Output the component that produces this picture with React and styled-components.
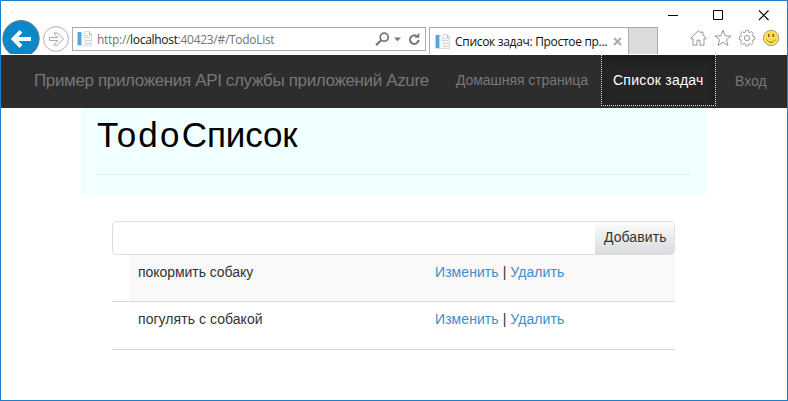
import React from 'react';
import styled, { createGlobalStyle } from 'styled-components';

const GlobalStyle = createGlobalStyle`
  * { box-sizing: border-box; }
  body { margin: 0; background: #fff; font-family: "Liberation Sans", Arial, sans-serif; }
  svg { display: block; flex: none; }
`;

const Window = styled.div`
  width: 788px;
  height: 401px;
  border: 1px solid #1a7fd0;
  background: #fff;
  overflow: hidden;
`;

const TitleBar = styled.div`
  height: 26px;
  display: flex;
  justify-content: flex-end;
  padding: 8px 17px 0 0;
  gap: 33px;
`;

const Toolbar = styled.div`
  height: 28px;
  display: flex;
  align-items: flex-start;
`;

const BackButton = styled.div`
  width: 40px;
  height: 34px;
  margin-top: -7px;
  overflow: hidden;
`;

const ForwardButton = styled.div`
  width: 31px;
  padding: 0 0 0 2px;
  margin-top: -1px;
`;

const AddressBar = styled.div`
  width: 354px;
  height: 24px;
  border: 1px solid #ababab;
  display: flex;
  align-items: center;
  padding: 0 3px 0 4px;
`;

const Url = styled.div`
  flex: 1;
  margin-left: 4px;
  font: 12px/22px "Open Sans", "Noto Sans", sans-serif;
  letter-spacing: ${(p) => p.$tracking}px;
  color: #757575;
  white-space: nowrap;
  padding-top: 1px;
`;

const Host = styled.span`
  color: #111;
`;

const Tab = styled.div`
  width: 200px;
  height: 27px;
  margin-left: 3px;
  border: 1px solid #ababab;
  border-bottom: 0;
  display: flex;
  align-items: center;
  padding: 1px 6px 0 5px;
`;

const TabTitle = styled.div`
  flex: 1;
  margin-left: 4px;
  font: 12px/22px "Open Sans", "Noto Sans", sans-serif;
  letter-spacing: ${(p) => p.$tracking}px;
  color: #111;
  white-space: nowrap;
`;

const NewTab = styled.div`
  width: 30px;
  height: 27px;
  margin-left: -1px;
  border: 1px solid #ababab;
  border-bottom: 0;
  background: #dcdcdc;
`;

const BrowserTools = styled.div`
  flex: 1;
  display: flex;
  justify-content: flex-end;
  gap: 6px;
  padding: 2px 7px 0 0;
`;

const NavBar = styled.nav`
  height: 53px;
  background: #2d2d2d;
  display: flex;
  color: #777;
`;

const Brand = styled.div`
  width: 443px;
  padding-left: 33px;
  font-size: 17px;
  line-height: 51px;
  letter-spacing: ${(p) => p.$tracking}px;
  white-space: nowrap;
`;

const NavLink = styled.div`
  width: ${(p) => p.$width}px;
  height: 51px;
  padding-left: ${(p) => p.$inset || 12}px;
  font-size: 14px;
  line-height: ${(p) => p.$line || 50}px;
  letter-spacing: ${(p) => p.$tracking || 0}px;
  white-space: nowrap;
`;

const ActiveNavLink = styled(NavLink)`
  padding-left: 11px;
  color: #fff;
  background: #252525;
  border: 1px dotted #ddd;
  border-top: 0;
  box-shadow: inset 0 4px 6px #1c1c1c;
`;

const Header = styled.header`
  width: 625px;
  height: 86px;
  margin-left: 80px;
  padding: 0 15px;
  background: #f0ffff;
`;

const Title = styled.h1`
  height: 67px;
  margin: 0;
  padding-left: 1px;
  border-bottom: 1px solid #dfeeee;
  font-size: 35px;
  font-weight: 400;
  line-height: 53px;
  letter-spacing: ${(p) => p.$tracking}px;
  color: #000;
  white-space: nowrap;
`;

const LatinPart = styled.span`
  letter-spacing: ${(p) => p.$tracking}px;
`;

const TodoPanel = styled.main`
  width: 563px;
  margin: 27px 0 0 111px;
`;

const AddForm = styled.div`
  height: 34px;
  display: flex;
  border: 1px solid #dedede;
  border-radius: 4px;
  overflow: hidden;
`;

const TaskField = styled.div`
  flex: 1;
`;

const AddButton = styled.div`
  width: 79px;
  padding-left: 9px;
  background: linear-gradient(#fdfdfd, #d9dadb);
  font-size: 14px;
  line-height: 31px;
  letter-spacing: ${(p) => p.$tracking}px;
  color: #333;
`;

const TaskRow = styled.div`
  height: ${(p) => p.$height}px;
  border-bottom: 1px solid #dadada;
  padding-left: 17px;
`;

const TaskCells = styled.div`
  height: 100%;
  display: grid;
  grid-template-columns: 297px 1fr;
  padding-left: 9px;
  background: ${(p) => (p.$striped ? '#f9f9f9' : '#fff')};
  font-size: 14px;
  line-height: 34px;
  color: #333;
`;

const TaskName = styled.div`
  letter-spacing: ${(p) => p.$tracking}px;
`;

const Actions = styled.div`
  letter-spacing: ${(p) => p.$tracking}px;
`;

const Link = styled.a`
  color: #428bca;
`;

const PageIcon = () => (
  <svg width="16" height="16" viewBox="0 0 16 16">
    <path d="M4.5 2.5h3v-2h5l2 2v12h-10z" fill="#f8f9fa" stroke="#d8dcdf" />
    <path d="M0 1h5v13H0z" fill="#b5d6ee" />
    <path d="M1 1h3v13H1z" fill="#58a4dc" />
    <path d="M0 14.5h5" stroke="#ddd" />
    <path d="M12.5 1v3H15" fill="none" stroke="#bbb" />
    <path d="M7 4.5h4M7 6.5h6M9 9.5h5M9 12.5h5" stroke="#cfd4d8" />
    <path d="M8.5 8v5" stroke="#ddd" />
  </svg>
);

const tasks = [
  { name: 'покормить собаку', height: 47, striped: true, tracking: -0.05 },
  { name: 'погулять с собакой', height: 48, striped: false, tracking: 0.05 },
];

export default function App() {
  return (
    <>
      <GlobalStyle />
      <Window>
        <TitleBar>
          <svg width="12" height="12" viewBox="0 0 12 12"><path d="M0 6.5h10" stroke="#000" /></svg>
          <svg width="12" height="12" viewBox="0 0 12 12"><path d="M.5 1.5h9v9h-9z" fill="none" stroke="#000" /></svg>
          <svg width="12" height="12" viewBox="0 0 12 12"><path d="M1 1.5l9.5 9.5M10.5 1.5L1 11" stroke="#000" strokeWidth="1.1" /></svg>
        </TitleBar>
        <Toolbar>
          <BackButton>
            <svg width="40" height="40" viewBox="0 0 40 40">
              <circle cx="20" cy="18.8" r="18.2" fill="#0a88c8" stroke="#69777e" />
              <path d="M30 18.9H13M20 11.3l-7.4 7.6 7.4 7.6" fill="none" stroke="#fff" strokeWidth="4" />
            </svg>
          </BackButton>
          <ForwardButton>
            <svg width="27" height="27" viewBox="0 0 27 27">
              <circle cx="13" cy="13" r="12.4" fill="#fff" stroke="#b0b0b0" />
              <path d="M6.5 11.5h8.2L10.8 7h3.6l6.1 6-6.1 6h-3.6l3.9-4.5H6.5z" fill="#fff" stroke="#aaa" />
            </svg>
          </ForwardButton>
          <AddressBar>
            <PageIcon />
            <Url $tracking={-0.3}>http://<Host>localhost</Host>:40423/#/TodoList</Url>
            <svg width="49" height="16" viewBox="0 0 49 16">
              <circle cx="11.2" cy="6.2" r="4" fill="none" stroke="#777" strokeWidth="1.8" />
              <path d="M8.3 9.2L3 14.1" stroke="#777" strokeWidth="2.2" />
              <path d="M21 6.5h7l-3.5 3.7z" fill="#777" />
              <path d="M45.6 8.9a4.3 4.3 0 1 1-2.2-4" fill="none" stroke="#777" strokeWidth="2" />
              <path d="M41.3 6.8h5V1.7z" fill="#777" />
            </svg>
          </AddressBar>
          <Tab>
            <PageIcon />
            <TabTitle $tracking={-0.31}>Список задач: Простое пр...</TabTitle>
            <svg width="9" height="9" viewBox="0 0 9 9"><path d="M1 1l7 7M8 1L1 8" stroke="#aaa" strokeWidth="2" /></svg>
          </Tab>
          <NewTab />
          <BrowserTools>
            <svg width="18" height="18" viewBox="0 0 18 18">
              <path d="M.7 9.2L8.5 1.7l2.5 2.4V3h2v3l3.3 3.2-1 1-1.3-1v7h-4v-5h-3v5H3v-7l-1.3 1z" fill="#fff" stroke="#999" />
            </svg>
            <svg width="18" height="18" viewBox="0 0 18 18">
              <path d="M9 1.2l2.1 5.6 6 .2-4.7 3.7 1.6 5.8L9 13.2l-5 3.3 1.6-5.8L.9 7l6-.2z" fill="#fff" stroke="#999" />
            </svg>
            <svg width="18" height="18" viewBox="0 0 18 18">
              <path d="M7.4 1.5h3l.4 2.1 1.2.5 1.8-1.3 2.1 2.1-1.3 1.8.5 1.2 2 .4v3l-2 .4-.5 1.2 1.3 1.8-2.1 2.1-1.8-1.3-1.2.5-.4 2h-3l-.4-2-1.2-.5L4 16.8l-2.1-2.1 1.3-1.8-.5-1.2-1.9-.4v-3l1.9-.4.5-1.2L1.9 4.9 4 2.8l1.8 1.3 1.2-.5z" transform="translate(.6 -.1) scale(.94)" fill="#fff" stroke="#999" />
              <circle cx="9" cy="9" r="2.6" fill="#fff" stroke="#999" />
            </svg>
            <svg width="18" height="18" viewBox="0 0 18 18">
              <circle cx="9" cy="9" r="7.7" fill="#ffdc52" stroke="#aaa38c" />
              <path d="M6.7 5v3M11.3 5v3" stroke="#725c21" strokeWidth="1.5" />
              <path d="M4.7 10.5c1.6 3.6 7 3.6 8.6 0" fill="none" stroke="#8c7630" />
            </svg>
          </BrowserTools>
        </Toolbar>
        <NavBar>
          <Brand $tracking={-0.36}>Пример приложения API службы приложений Azure</Brand>
          <NavLink $width={157} $tracking={-0.07}>Домашняя страница</NavLink>
          <ActiveNavLink $width={115} $tracking={0.25}>Список задач</ActiveNavLink>
          <NavLink $width={60} $line={53} $inset={19}>Вход</NavLink>
        </NavBar>
        <Header>
          <Title $tracking={-0.1}><LatinPart $tracking={2.2}>Todo</LatinPart>Список</Title>
        </Header>
        <TodoPanel>
          <AddForm>
            <TaskField />
            <AddButton $tracking={0.08}>Добавить</AddButton>
          </AddForm>
          {tasks.map((task) => (
            <TaskRow key={task.name} $height={task.height}>
              <TaskCells $striped={task.striped}>
                <TaskName $tracking={task.tracking}>{task.name}</TaskName>
                <Actions $tracking={0.07}>
                  <Link>Изменить</Link> | <Link>Удалить</Link>
                </Actions>
              </TaskCells>
            </TaskRow>
          ))}
        </TodoPanel>
      </Window>
    </>
  );
}
